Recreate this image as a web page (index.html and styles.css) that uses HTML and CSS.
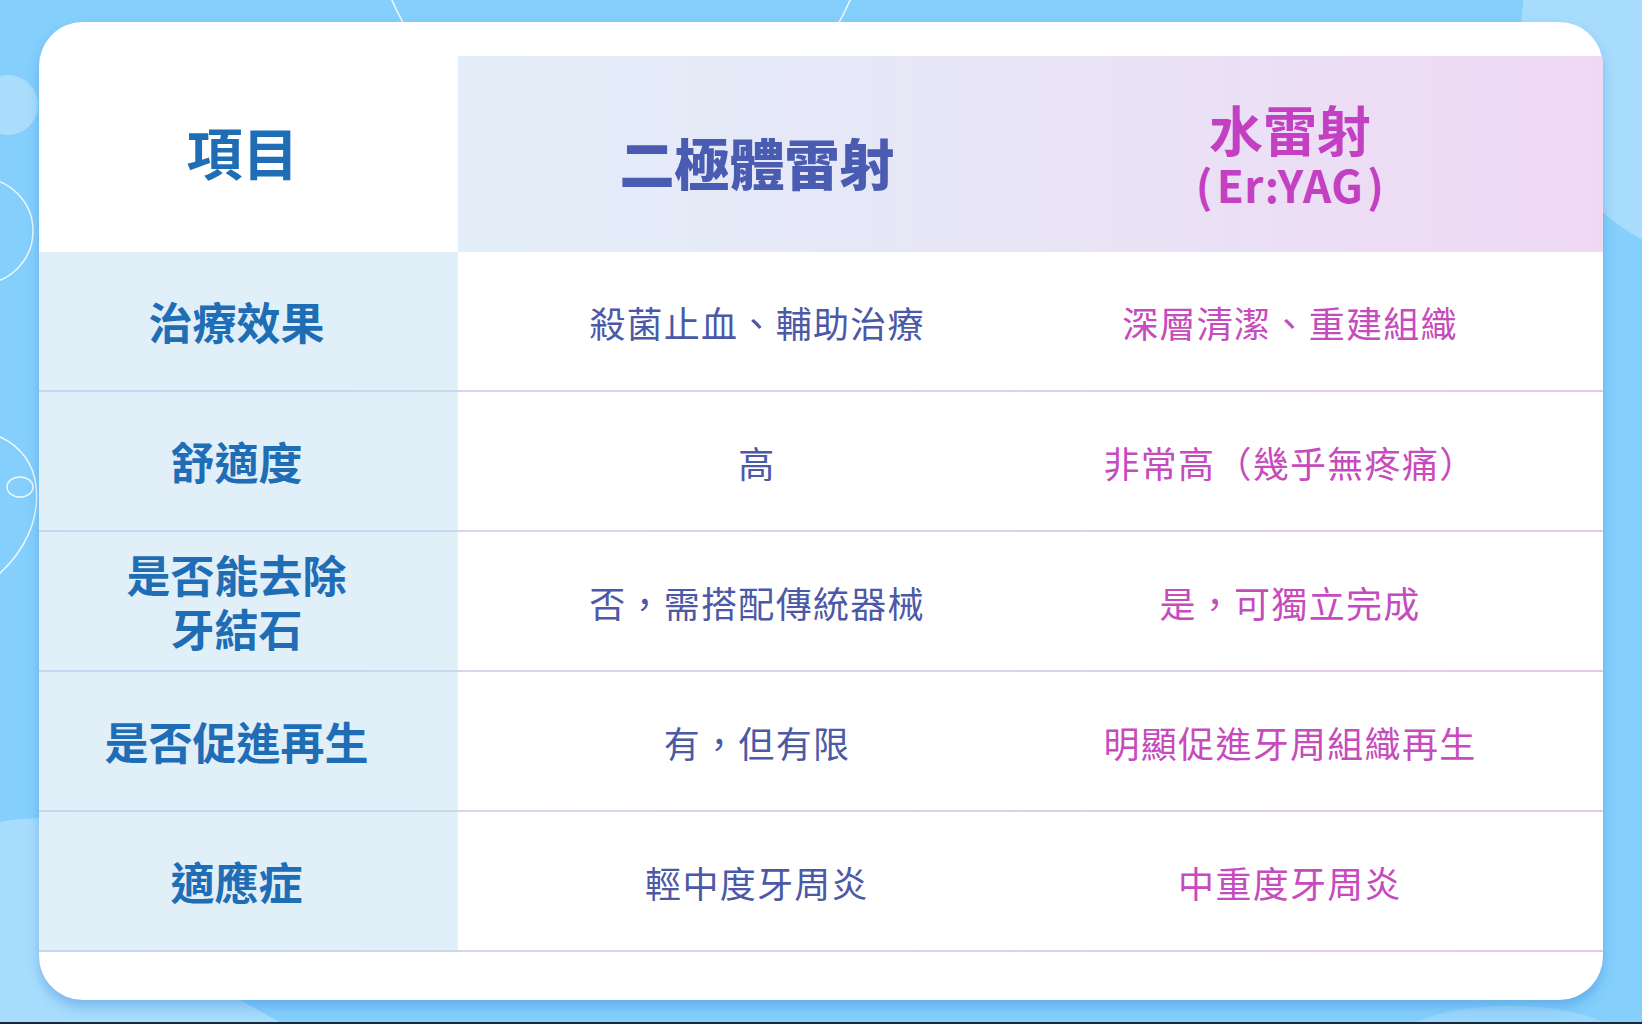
FILE: index.html
```html
<!DOCTYPE html>
<html lang="zh-Hant">
<head>
<meta charset="utf-8">
<title>二極體雷射 vs 水雷射</title>
<link rel="stylesheet" href="styles.css">
</head>
<body>
<div class="page">
  <svg class="deco" width="1642" height="1024" viewBox="0 0 1642 1024" aria-hidden="true">
    <circle cx="1756" cy="34" r="235" fill="#a7dcfc"/>
    <path d="M0 822 C 120 800 200 880 240 1000 L 283 1024 L 0 1024 Z" fill="#a7dcfc"/>
    <ellipse cx="1510" cy="1040" rx="110" ry="34" fill="#9ad7fc"/>
    <circle cx="8" cy="105" r="30" fill="#a9ddfb"/>
    <circle cx="621" cy="-100" r="250" fill="none" stroke="#ffffff" stroke-width="1.5" opacity="0.85"/>
    <circle cx="-20" cy="231" r="53" fill="none" stroke="#ffffff" stroke-width="1.5" opacity="0.85"/>
    <path d="M-2 436 C 22 446 34 466 36 486 C 40 520 24 552 -2 575" fill="none" stroke="#ffffff" stroke-width="1.5" opacity="0.85"/>
    <ellipse cx="20" cy="487" rx="13" ry="10" fill="none" stroke="#ffffff" stroke-width="1.5" opacity="0.85"/>
  </svg>

  <div class="card">
    <div class="row head">
      <div class="cell c1"><span class="h-item">項目</span></div>
      <div class="cell c2 head-cell"><span class="h-diode">二極體雷射</span></div>
      <div class="cell c3 head-cell water"><span class="h-water">水雷射</span><span class="h-sub"><span class="paren">(</span>Er:YAG<span class="paren">)</span></span></div>
    </div>

    <div class="row">
      <div class="cell c1 label">治療效果</div>
      <div class="cell c2 val-a">殺菌止血、輔助治療</div>
      <div class="cell c3 val-b">深層清潔、重建組織</div>
    </div>

    <div class="row">
      <div class="cell c1 label">舒適度</div>
      <div class="cell c2 val-a">高</div>
      <div class="cell c3 val-b">非常高（幾乎無疼痛）</div>
    </div>

    <div class="row">
      <div class="cell c1 label two-line">是否能去除<br>牙結石</div>
      <div class="cell c2 val-a">否，需搭配傳統器械</div>
      <div class="cell c3 val-b">是，可獨立完成</div>
    </div>

    <div class="row">
      <div class="cell c1 label">是否促進再生</div>
      <div class="cell c2 val-a">有，但有限</div>
      <div class="cell c3 val-b">明顯促進牙周組織再生</div>
    </div>

    <div class="row">
      <div class="cell c1 label">適應症</div>
      <div class="cell c2 val-a">輕中度牙周炎</div>
      <div class="cell c3 val-b">中重度牙周炎</div>
    </div>
  </div>
</div>
</body>
</html>
```

FILE: styles.css
```css
* { box-sizing: border-box; }

html, body {
  margin: 0;
  padding: 0;
}

body {
  width: 1642px;
  height: 1024px;
  overflow: hidden;
  font-family: "Noto Sans CJK TC", "Noto Sans", sans-serif;
}

.page {
  position: relative;
  width: 1642px;
  height: 1024px;
  background: #84cffb;
  border-bottom: 2px solid #172a3b;
  padding: 22px 39px 0 39px;
  overflow: hidden;
}

.deco {
  position: absolute;
  left: 0;
  top: 0;
  z-index: 0;
}

.card {
  position: relative;
  z-index: 1;
  width: 1564px;
  height: 978px;
  background: #ffffff;
  border-radius: 44px;
  padding: 34px 0 48px 0;
  overflow: hidden;
  box-shadow: 0 7px 12px rgba(40, 120, 210, 0.35);
}

.row {
  display: grid;
  grid-template-columns: 419px 598px 547px;
  height: 140px;
  padding-bottom: 2px;
  background: linear-gradient(90deg, #c6d8ef 0, #c9daef 419px, #d5d9ea 420px, #dcd3ea 1017px, #e7c8eb 100%) left bottom / 100% 2px no-repeat;
}

.row.head {
  height: 196px;
  padding-bottom: 0;
  background: linear-gradient(90deg, #e3eef9 0%, #e8e5f6 50%, #efd8f4 100%) 419px 0 / 1145px 100% no-repeat;
}

.cell {
  display: flex;
  flex-direction: column;
  align-items: center;
  justify-content: center;
  text-align: center;
  padding-top: 4px;
}

.c1 { padding-right: 24px; }
.c3 { padding-right: 79px; }

.row:not(.head) .c1 { background: #e1eff9; }

.row:not(.head) .label { padding-top: 0; }

.head .c1 { padding-top: 0; padding-bottom: 6px; padding-right: 12px; }
.head-cell { padding-top: 14px; }
.head-cell.water { padding-top: 2px; }

.h-item {
  font-size: 56px;
  font-weight: 700;
  color: #1f6db5;
  line-height: 1;
}

.h-diode {
  font-size: 55px;
  font-weight: 900;
  color: #4a5bb2;
  line-height: 1;
}

.h-water {
  font-size: 54px;
  font-weight: 700;
  color: #c340c3;
  line-height: 58px;
}

.h-sub {
  font-size: 44px;
  font-weight: 700;
  color: #c340c3;
  line-height: 52px;
  letter-spacing: 0.5px;
}

.paren {
  margin: 0 4px;
}

.label {
  font-size: 44px;
  font-weight: 700;
  color: #1f6db5;
  line-height: 54px;
}

.val-a, .val-b {
  font-size: 36px;
  font-weight: 400;
  letter-spacing: 1.3px;
  line-height: 1.2;
}

.val-a { color: #4b59a6; }
.val-b { color: #c64bbd; }
```
